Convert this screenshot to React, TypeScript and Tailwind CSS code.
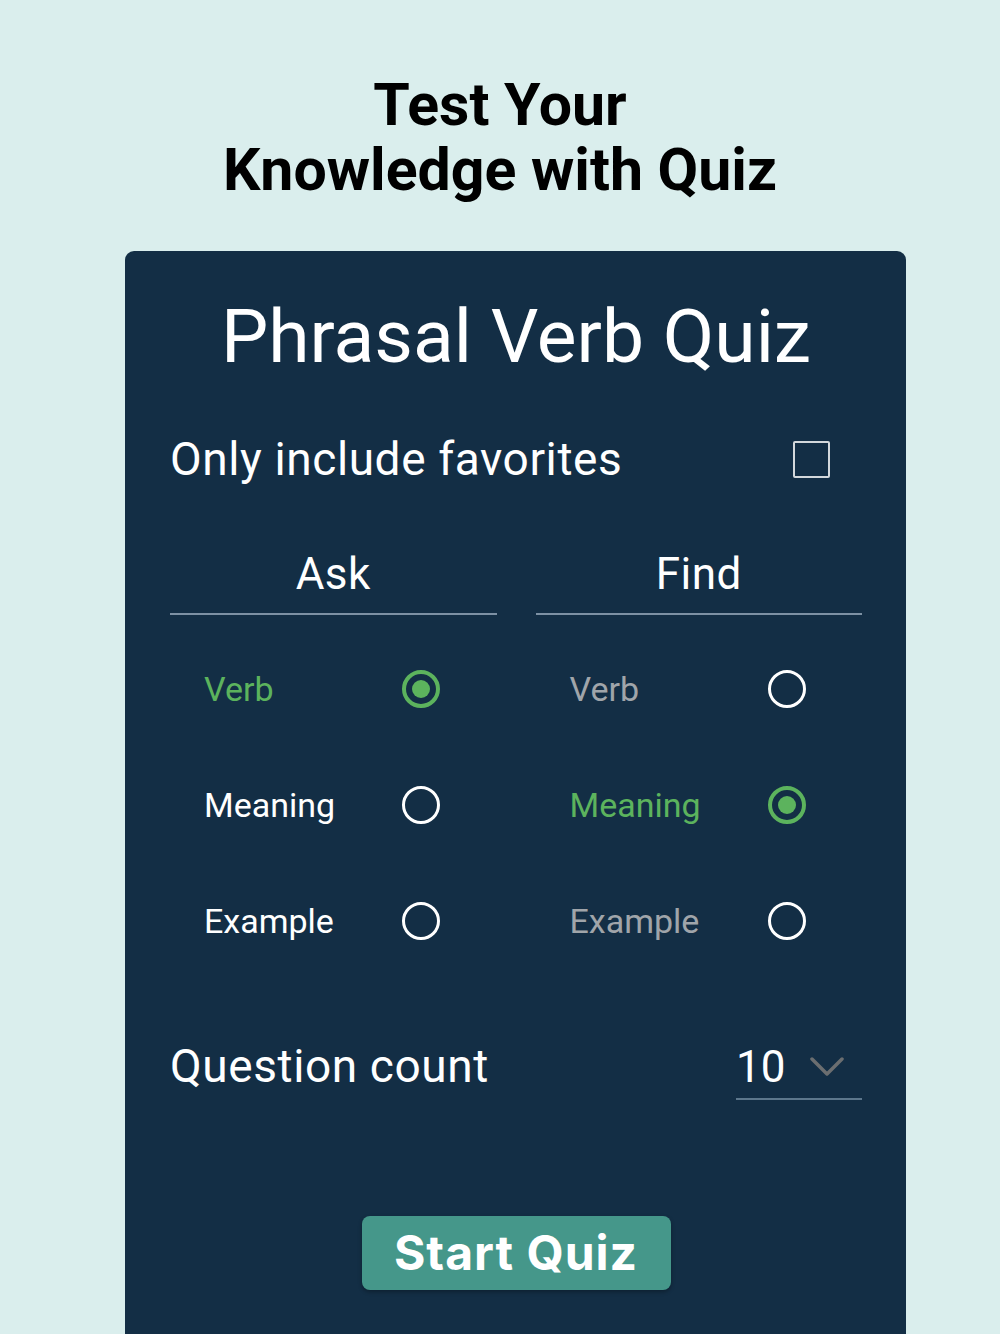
import React from "react";

function Radio({ checked }: { checked: boolean }) {
  if (checked) {
    return (
      <div className="w-[38px] h-[38px] rounded-full border-[4px] border-[#5cb35d] flex items-center justify-center shrink-0">
        <div className="w-[18px] h-[18px] rounded-full bg-[#5cb35d]" />
      </div>
    );
  }
  return <div className="w-[38px] h-[38px] rounded-full border-[3px] border-white shrink-0" />;
}

type Opt = { label: string; checked: boolean; color: string };

function Column({ title, options }: { title: string; options: Opt[] }) {
  return (
    <div className="flex flex-col">
      <div className="h-[63px] border-b-2 border-[#7d91a4] flex justify-center">
        <span className="text-[44px] leading-[44px] tracking-[0.5px] text-white">{title}</span>
      </div>
      <div className="flex flex-col mt-[16px]">
        {options.map((o) => (
          <div key={o.label} className="h-[116px] flex items-center pl-[34px]">
            <span className={`w-[198px] text-[34px] leading-[34px] ${o.color}`}>{o.label}</span>
            <Radio checked={o.checked} />
          </div>
        ))}
      </div>
    </div>
  );
}

export default function App() {
  return (
    <div
      className="w-[1000px] h-[1334px] overflow-hidden bg-[#daeeed] flex flex-col items-center"
      style={{ fontFamily: "Roboto, 'Liberation Sans', sans-serif" }}
    >
      <h1 className="mt-[72px] text-[59px] leading-[65px] font-bold text-black text-center">
        Test Your
        <br />
        Knowledge with Quiz
      </h1>
      <div className="mt-[49px] self-start ml-[125px] w-[781px] flex-1 bg-[#132e45] rounded-t-[9px] pt-[48px] pl-[45px] pr-[44px] flex flex-col">
        <div className="text-[75px] leading-[74px] text-white text-center">Phrasal Verb Quiz</div>
        <div className="mt-[63px] flex items-center justify-between">
          <span className="text-[46px] leading-[46px] tracking-[0.6px] text-white">Only include favorites</span>
          <div className="w-[37px] h-[37px] border-2 border-[#d3d8dc] rounded-[2px] mr-[32px]" />
        </div>
        <div className="mt-[70px] grid grid-cols-2 gap-[39px]">
          <Column
            title="Ask"
            options={[
              { label: "Verb", checked: true, color: "text-[#5cb35d]" },
              { label: "Meaning", checked: false, color: "text-white" },
              { label: "Example", checked: false, color: "text-white" },
            ]}
          />
          <Column
            title="Find"
            options={[
              { label: "Verb", checked: false, color: "text-[#a0a5aa]" },
              { label: "Meaning", checked: true, color: "text-[#5cb35d]" },
              { label: "Example", checked: false, color: "text-[#a0a5aa]" },
            ]}
          />
        </div>
        <div className="mt-[64px] flex items-start justify-between">
          <span className="text-[46px] leading-[46px] tracking-[0.6px] text-white">Question count</span>
          <div className="w-[126px] pt-[2px] pb-[9px] border-b-2 border-[#5d778c] flex items-center justify-between pr-[18px]">
            <span className="text-[44px] leading-[44px] text-white">10</span>
            <svg width="34" height="20" viewBox="0 0 34 20" fill="none">
              <path d="M2 2 L17 17 L32 2" stroke="#6b6e70" strokeWidth="3.5" strokeLinecap="round" strokeLinejoin="round" />
            </svg>
          </div>
        </div>
        <div className="mt-[116px] flex justify-center">
          <button
            className="w-[309px] h-[74px] rounded-[8px] bg-[#45978a] text-white font-bold text-[48px] leading-[48px] tracking-[1px] shadow-[0_2px_4px_rgba(0,0,0,0.3)]"
            style={{ fontFamily: "Inter, Roboto, sans-serif" }}
          >
            Start Quiz
          </button>
        </div>
      </div>
    </div>
  );
}
